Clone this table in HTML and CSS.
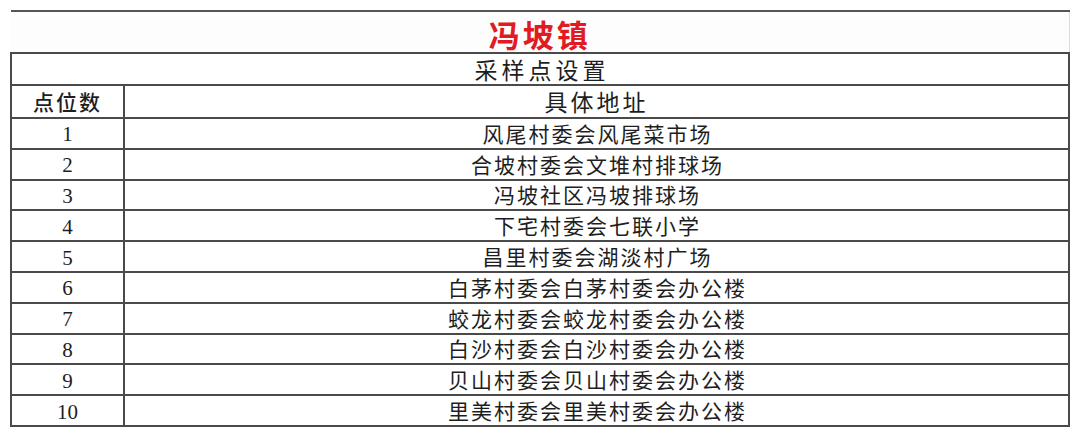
FILE: index.html
```html
<!DOCTYPE html>
<html lang="zh-CN">
<head>
<meta charset="utf-8">
<title>冯坡镇 采样点设置</title>
<link rel="stylesheet" href="styles.css">
</head>
<body>
<table class="sheet">
  <colgroup><col class="col-num"><col class="col-addr"></colgroup>
  <tr class="row-title"><td class="title" colspan="2">冯坡镇</td></tr>
  <tr class="row-sub"><td class="sub" colspan="2">采样点设置</td></tr>
  <tr class="row-head"><td class="head-num">点位数</td><td class="head-addr">具体地址</td></tr>
  <tr class="row"><td class="num">1</td><td class="addr">风尾村委会风尾菜市场</td></tr>
  <tr class="row"><td class="num">2</td><td class="addr">合坡村委会文堆村排球场</td></tr>
  <tr class="row"><td class="num">3</td><td class="addr">冯坡社区冯坡排球场</td></tr>
  <tr class="row"><td class="num">4</td><td class="addr">下宅村委会七联小学</td></tr>
  <tr class="row"><td class="num">5</td><td class="addr">昌里村委会湖淡村广场</td></tr>
  <tr class="row"><td class="num">6</td><td class="addr">白茅村委会白茅村委会办公楼</td></tr>
  <tr class="row"><td class="num">7</td><td class="addr">蛟龙村委会蛟龙村委会办公楼</td></tr>
  <tr class="row"><td class="num">8</td><td class="addr">白沙村委会白沙村委会办公楼</td></tr>
  <tr class="row"><td class="num">9</td><td class="addr">贝山村委会贝山村委会办公楼</td></tr>
  <tr class="row"><td class="num">10</td><td class="addr">里美村委会里美村委会办公楼</td></tr>
</table>
</body>
</html>
```

FILE: styles.css
```css
html, body {
  margin: 0;
  padding: 0;
  background: #ffffff;
}
body {
  padding: 10px 0 0 10px;
  font-family: "Noto Sans CJK SC", "Liberation Serif", serif;
  color: #1e1e1e;
}
.sheet {
  border-collapse: collapse;
  width: 1060px;
  table-layout: fixed;
}
.col-num { width: 113px; }
.col-addr { width: auto; }
.sheet td {
  border: 2px solid #4a4a4a;
  padding: 0;
  text-align: center;
  vertical-align: middle;
  white-space: nowrap;
}
.row-title { height: 42px; }
.row-sub { height: 32px; }
.row-head { height: 33px; }
.row { height: 30.8px; }

.title {
  border-left: none !important;
  border-right: 1px solid #dcdcdc !important;
  border-top: 2px solid #555 !important;
  color: #e01b22;
  font-size: 31px;
  font-weight: 700;
  letter-spacing: 3px;
  line-height: 1;
  padding-top: 2px !important;
  background: #fdfdfd;
}
.sub {
  font-size: 23px;
  letter-spacing: 4px;
  line-height: 1;
  padding-left: 4px !important;
}
.head-num {
  font-size: 21px;
  letter-spacing: 2px;
  line-height: 1;
  font-weight: 500;
}
.head-addr {
  font-size: 23px;
  letter-spacing: 3px;
  line-height: 1;
}
.num {
  font-family: "Liberation Serif", serif;
  font-size: 21px;
  line-height: 1;
  padding-top: 3px !important;
}
.addr {
  font-size: 21px;
  letter-spacing: 2px;
  line-height: 1;
  padding-left: 2px !important;
}
```
